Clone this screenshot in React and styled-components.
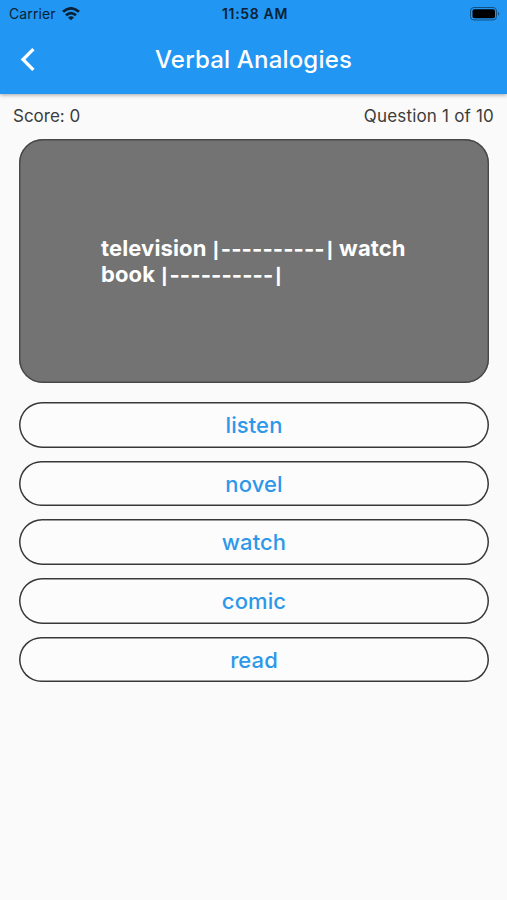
import React from 'react';
import styled, { createGlobalStyle } from 'styled-components';

const Global = createGlobalStyle`
  * { box-sizing: border-box; }
  body { margin: 0; background: #fafafa; font-family: Inter, sans-serif; }
`;
const Screen = styled.main`
  width: 507px;
  height: 900px;
  background: #fafafa;
  overflow: hidden;
`;
const Header = styled.header`
  height: 94px;
  background: #2196f3;
  box-shadow: 0 1px 4px rgba(0, 0, 0, 0.35);
`;
const StatusBar = styled.div`
  height: 27px;
  display: grid;
  grid-template-columns: 1fr auto 1fr;
  align-items: center;
  padding: 0 6px 0 9px;
  color: #0a2134;
`;
const Carrier = styled.div`
  display: flex;
  align-items: center;
  gap: 6px;
  font-size: 14px;
  letter-spacing: 0.12px;
`;
const Time = styled.div`
  font-size: 14px;
  font-weight: 600;
  letter-spacing: 0.65px;
  font-feature-settings: 'calt' 0;
`;
const Battery = styled.svg`
  justify-self: end;
  display: block;
`;
const NavBar = styled.div`
  height: 66px;
  display: grid;
  grid-template-columns: 56px 1fr 56px;
  align-items: center;
`;
const BackButton = styled.button`
  border: 0;
  padding: 0 0 0 20px;
  background: none;
  display: flex;
`;
const Title = styled.h1`
  margin: 0;
  padding-bottom: 2px;
  text-align: center;
  color: #fff;
  font-size: 24px;
  font-weight: 500;
  letter-spacing: 0.18px;
  white-space: nowrap;
`;
const ScoreRow = styled.div`
  height: 45px;
  padding: 0 13px 2px;
  display: flex;
  align-items: center;
  justify-content: space-between;
  font-size: 17px;
  color: #3c3c3c;
`;
const Progress = styled.span`
  letter-spacing: 0.19px;
`;
const QuestionCard = styled.section`
  margin: 0 18px 0 19px;
  height: 244px;
  border-radius: 24px;
  box-shadow: inset 0 0 0 1.4px #484848;
  background: #737373;
  display: flex;
  align-items: center;
  padding-left: 82px;
  color: #fff;
`;
const Prompt = styled.div`
  font-size: 22px;
  line-height: 26px;
  font-weight: 700;
  letter-spacing: 0.12px;
  white-space: nowrap;
  font-feature-settings: 'calt' 0;
`;
const PromptLine = styled.div`
  height: 26px;
`;
const Pipe = styled.span`
  display: inline-block;
  width: 8px;
  line-height: 1;
  text-align: center;
  font-size: 16px;
  font-weight: 800;
  letter-spacing: 0;
`;
const Blank = styled.span`
  display: inline-block;
  width: 106px;
  line-height: 1;
  text-align: center;
  vertical-align: -1px;
  letter-spacing: 0.1px;
`;
const Answers = styled.div`
  display: grid;
  gap: 13.1px;
  padding: 19px 18px 0 19px;
`;
const Answer = styled.button`
  height: 45.6px;
  padding: 0.6px 0 0;
  border: 0;
  border-radius: 23px;
  box-shadow: inset 0 0 0 1.5px #383838;
  background: #fcfcfc;
  color: #2d98ea;
  font: 500 22px Inter, sans-serif;
  letter-spacing: 0.1px;
`;

const answers = ['listen', 'novel', 'watch', 'comic', 'read'];

export default function App() {
  return (
    <Screen>
      <Global />
      <Header>
        <StatusBar>
          <Carrier>
            Carrier
            <svg width="18" height="14" viewBox="0 0 18 14" fill="none" stroke="currentColor" strokeWidth="2.8">
              <path d="M1 4.8Q9-2 17 4.8M4 8.3Q9 4 14 8.3" />
              <path d="M9 13.3L6 10.5Q9 8.2 12 10.5Z" fill="currentColor" stroke="none" />
            </svg>
          </Carrier>
          <Time>11:58 AM</Time>
          <Battery width="31" height="14" viewBox="0 0 31 14">
            <rect x=".5" y=".5" width="26" height="12.5" rx="3.5" fill="none" stroke="#12507f" />
            <rect x="2.5" y="2.2" width="22.5" height="9" rx="2" fill="#000" />
            <path d="M28 4.8Q30.5 6.8 28 8.8Z" fill="#12507f" />
          </Battery>
        </StatusBar>
        <NavBar>
          <BackButton aria-label="Back">
            <svg width="16" height="26" viewBox="0 0 16 26" fill="none" stroke="#fff" strokeWidth="3.3">
              <path d="M13.4 2.1L3 12.5L13.4 22.9" />
            </svg>
          </BackButton>
          <Title>Verbal Analogies</Title>
        </NavBar>
      </Header>
      <ScoreRow>
        <span>Score: 0</span>
        <Progress>Question 1 of 10</Progress>
      </ScoreRow>
      <QuestionCard>
        <Prompt>
          <PromptLine>television <Pipe>|</Pipe><Blank>----------</Blank><Pipe>|</Pipe> watch</PromptLine>
          <PromptLine>book <Pipe>|</Pipe><Blank>----------</Blank><Pipe>|</Pipe></PromptLine>
        </Prompt>
      </QuestionCard>
      <Answers>
        {answers.map((a) => <Answer key={a}>{a}</Answer>)}
      </Answers>
    </Screen>
  );
}
